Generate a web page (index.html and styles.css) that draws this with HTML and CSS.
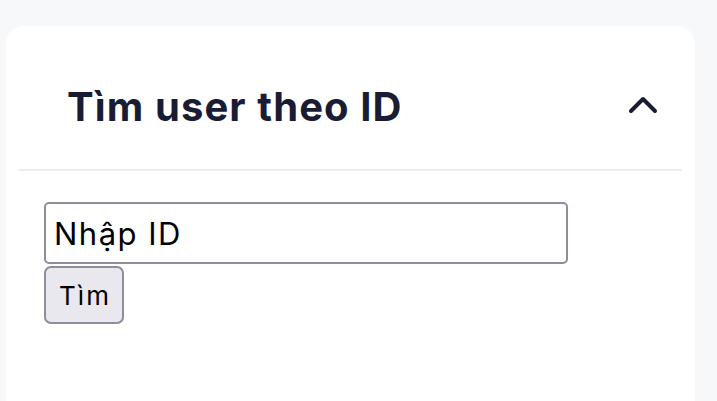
FILE: index.html
```html
<html>
<head>
    <meta http-equiv="Content-Type" content="text/html; charset=UTF-8" />
    <title>Tìm user theo ID</title>
    <link rel="stylesheet" href="styles.css">
</head>
<body>

<div class="card">
    <div class="cardHead">
        <h2>Tìm user theo ID</h2>
        <svg class="chevron" width="30" height="18" viewBox="0 0 30 18">
            <path d="M3 15 L15 3 L27 15" fill="none" stroke="#1a1c33" stroke-width="4" stroke-linecap="round" stroke-linejoin="round"/>
        </svg>
    </div>
    <div class="cardBody">
        <input class="idInput" type="text" value="Nhập ID">
        <br>
        <button class="btn">Tìm</button>
    </div>
</div>

</body>
</html>
```

FILE: styles.css
```css
        html {
            width:100%;
            height:100%;
            overflow:hidden;
        }

        body {
            font-family: Inter, "Noto Sans", sans-serif;
            color: #1a1c33;
            background: #f7f8fa;
            margin: 0;
            padding: 26px 22px 0 6px;
        }

        .card {
            background: #fff;
            border-radius: 18px;
            padding: 0 13px;
            min-height: 420px;
        }

        .cardHead {
            display: flex;
            align-items: center;
            justify-content: space-between;
            height: 143px;
            padding: 0 24px 0 48px;
            border-bottom: 2px solid #ececf1;
        }

        .cardHead h2 {
            margin: 0;
            font-size: 40px;
            font-weight: 700;
            color: #1a1c33;
            padding-top: 18px;
            letter-spacing: 1.1px;
        }

        .chevron {
            display: block;
            margin-top: 14px;
        }

        .cardBody {
            padding: 31px 25px;
        }

        .idInput {
            width: 524px;
            height: 62px;
            box-sizing: border-box;
            border: 2px solid #8f8d9c;
            border-radius: 5px;
            padding: 0 8px;
            font-family: Inter, "Noto Sans", sans-serif;
            font-size: 31px;
            letter-spacing: 1.5px;
            color: #000;
            margin: 0;
        }

        .btn {
            margin: 2px 0 0 0;
            width: 80px;
            height: 58px;
            box-sizing: border-box;
            background: #e9e8ee;
            border: 2px solid #8f8d9c;
            border-radius: 7px;
            font-family: Inter, "Noto Sans", sans-serif;
            font-size: 26px;
            letter-spacing: 2px;
            color: #000;
            padding: 0 0 0 2px;
        }
```
